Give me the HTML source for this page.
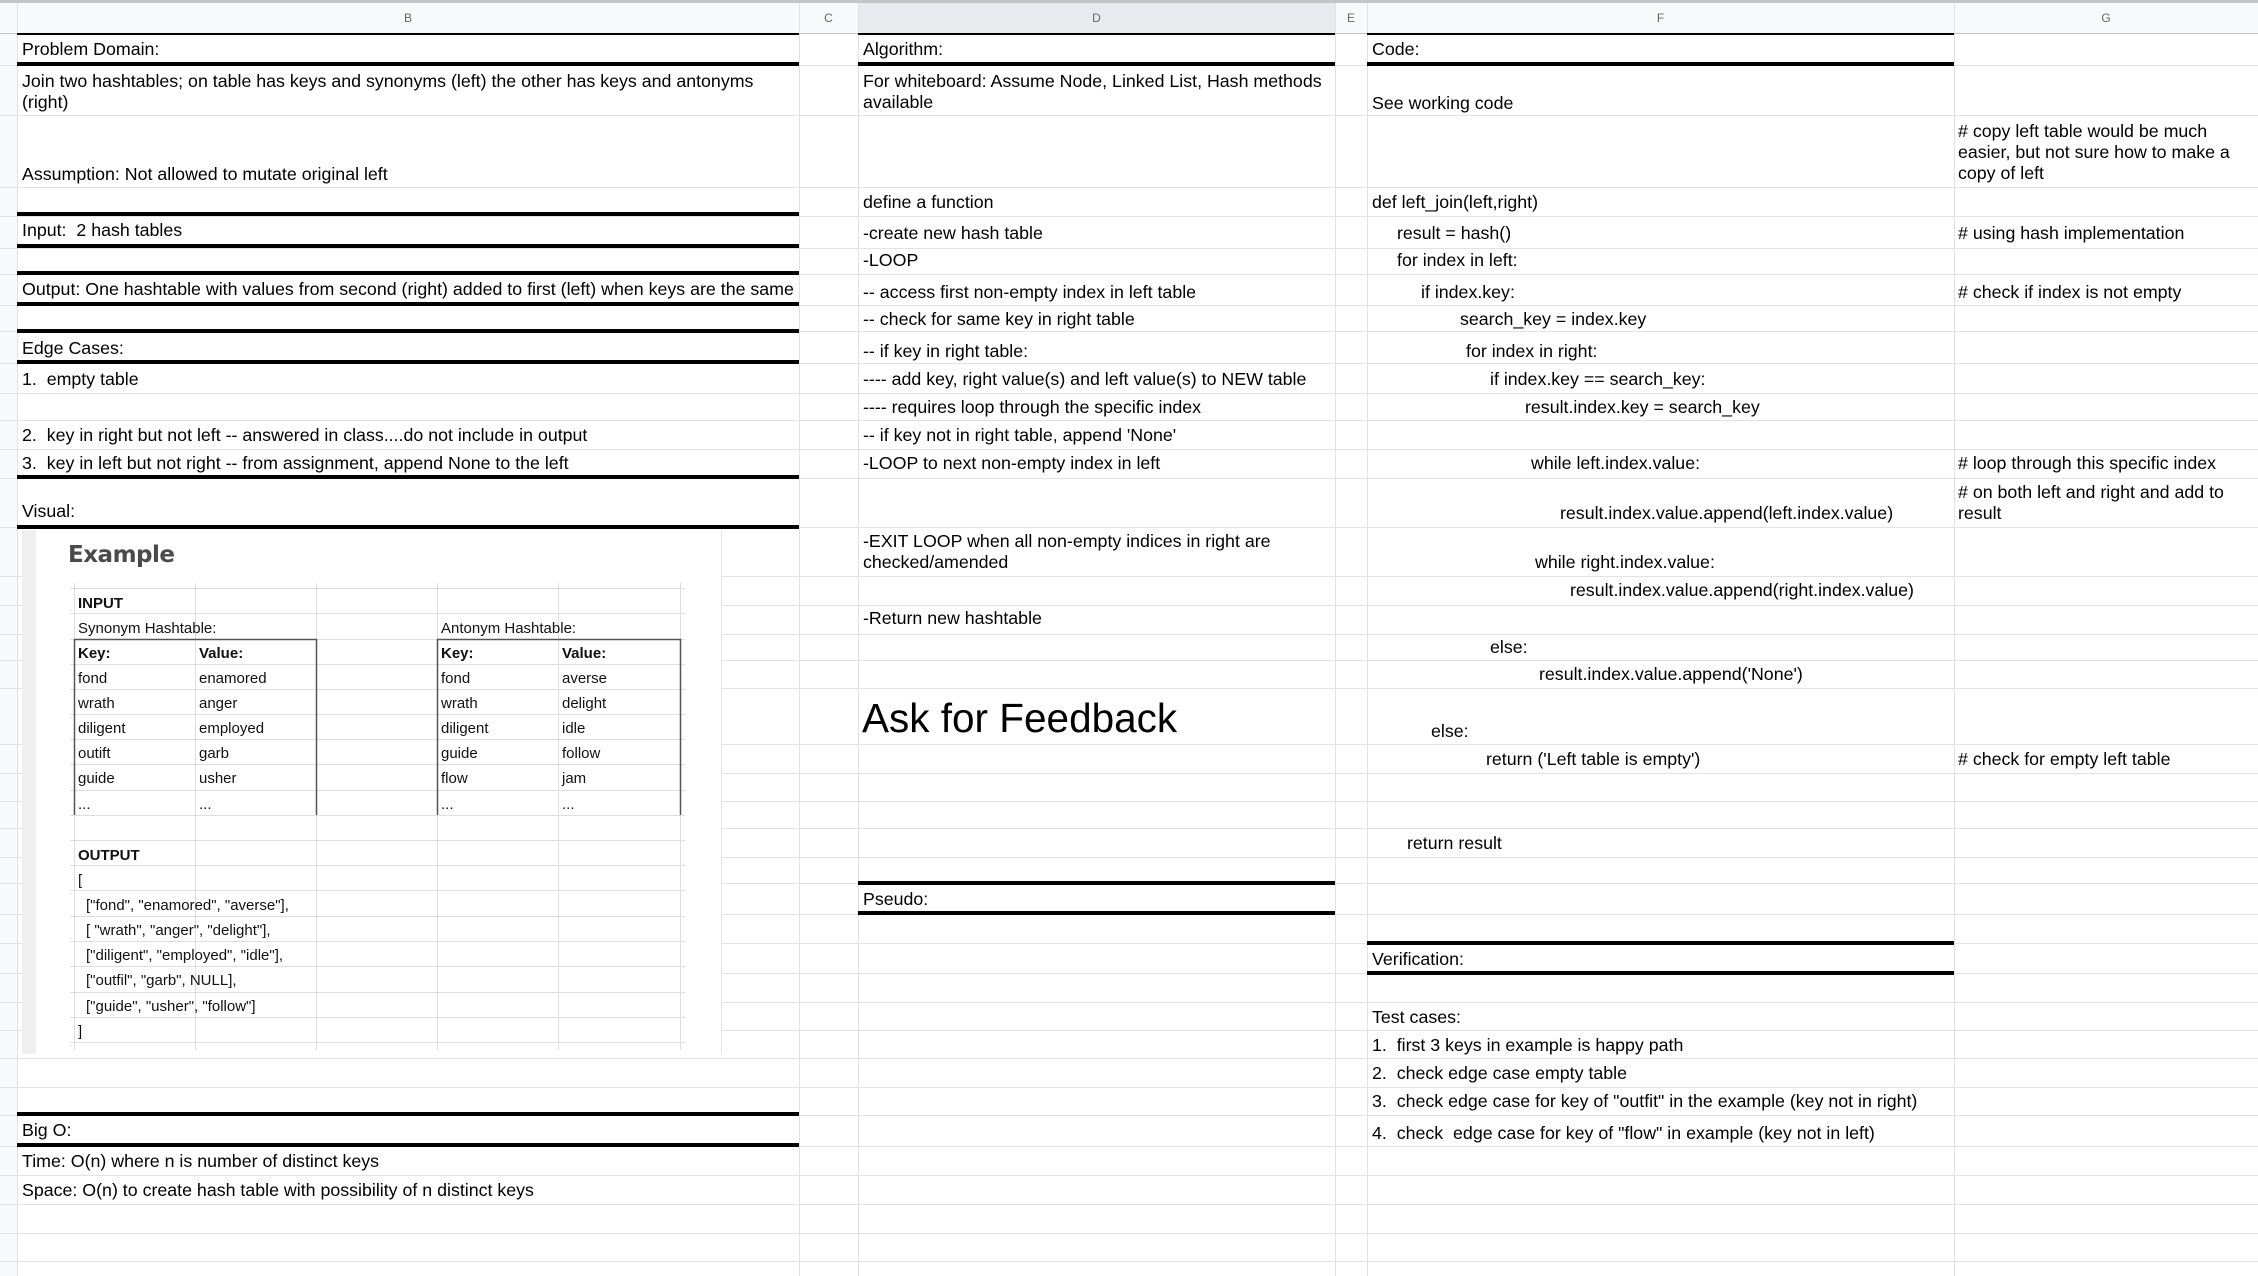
<!DOCTYPE html>
<html><head><meta charset="utf-8"><style>
*{margin:0;padding:0;box-sizing:border-box}
body{width:2258px;height:1276px;position:relative;overflow:hidden;background:#fff;font-family:"Liberation Sans",Arial,sans-serif;color:#000}
.t{position:absolute;font-size:17.8px;line-height:21px;white-space:nowrap;margin-top:1px}
.h{position:absolute;top:3px;height:30px;line-height:30px;font-size:12px;color:#666;text-align:center}
.b{position:absolute;background:#000}
.e{position:absolute;font-size:15px;line-height:17px;white-space:nowrap;color:#111}
</style></head><body>
<svg width="2258" height="1276" style="position:absolute;left:0;top:0">
<rect x="0" y="0" width="2258" height="3" fill="#c4c4c4"/>
<rect x="0" y="3" width="2258" height="30" fill="#f8f9fa"/>
<rect x="858" y="3" width="477" height="30" fill="#e8eaed"/>
<rect x="0" y="33" width="17" height="1243" fill="#f8f9fa"/>
<g stroke="#e2e2e2" stroke-width="1">
<line x1="0" y1="33.5" x2="2258" y2="33.5"/><line x1="0" y1="65.5" x2="2258" y2="65.5"/><line x1="0" y1="115.5" x2="2258" y2="115.5"/><line x1="0" y1="187.5" x2="2258" y2="187.5"/><line x1="0" y1="216.5" x2="2258" y2="216.5"/><line x1="0" y1="248.5" x2="2258" y2="248.5"/><line x1="0" y1="274.5" x2="2258" y2="274.5"/><line x1="0" y1="305.5" x2="2258" y2="305.5"/><line x1="0" y1="331.5" x2="2258" y2="331.5"/><line x1="0" y1="363.5" x2="2258" y2="363.5"/><line x1="0" y1="393.5" x2="2258" y2="393.5"/><line x1="0" y1="420.5" x2="2258" y2="420.5"/><line x1="0" y1="449.5" x2="2258" y2="449.5"/><line x1="0" y1="478.5" x2="2258" y2="478.5"/><line x1="0" y1="527.5" x2="2258" y2="527.5"/><line x1="0" y1="576.5" x2="2258" y2="576.5"/><line x1="0" y1="605.5" x2="2258" y2="605.5"/><line x1="0" y1="634.5" x2="2258" y2="634.5"/><line x1="0" y1="660.5" x2="2258" y2="660.5"/><line x1="0" y1="688.5" x2="2258" y2="688.5"/><line x1="0" y1="744.5" x2="2258" y2="744.5"/><line x1="0" y1="773.5" x2="2258" y2="773.5"/><line x1="0" y1="801.5" x2="2258" y2="801.5"/><line x1="0" y1="828.5" x2="2258" y2="828.5"/><line x1="0" y1="857.5" x2="2258" y2="857.5"/><line x1="0" y1="883.5" x2="2258" y2="883.5"/><line x1="0" y1="914.5" x2="2258" y2="914.5"/><line x1="0" y1="943.5" x2="2258" y2="943.5"/><line x1="0" y1="973.5" x2="2258" y2="973.5"/><line x1="0" y1="1002.5" x2="2258" y2="1002.5"/><line x1="0" y1="1030.5" x2="2258" y2="1030.5"/><line x1="0" y1="1058.5" x2="2258" y2="1058.5"/><line x1="0" y1="1087.5" x2="2258" y2="1087.5"/><line x1="0" y1="1115.5" x2="2258" y2="1115.5"/><line x1="0" y1="1146.5" x2="2258" y2="1146.5"/><line x1="0" y1="1175.5" x2="2258" y2="1175.5"/><line x1="0" y1="1204.5" x2="2258" y2="1204.5"/><line x1="0" y1="1233.5" x2="2258" y2="1233.5"/><line x1="0" y1="1261.5" x2="2258" y2="1261.5"/>
<line x1="17.5" y1="3" x2="17.5" y2="1276"/><line x1="799.5" y1="3" x2="799.5" y2="1276"/><line x1="858.5" y1="3" x2="858.5" y2="1276"/><line x1="1335.5" y1="3" x2="1335.5" y2="1276"/><line x1="1367.5" y1="3" x2="1367.5" y2="1276"/><line x1="1954.5" y1="3" x2="1954.5" y2="1276"/>
</g>
<line x1="0" y1="33.5" x2="2258" y2="33.5" stroke="#c4c4c4"/>
</svg>
<div class="h" style="left:17px;width:782px">B</div>
<div class="h" style="left:799px;width:59px">C</div>
<div class="h" style="left:858px;width:477px">D</div>
<div class="h" style="left:1335px;width:32px">E</div>
<div class="h" style="left:1367px;width:587px">F</div>
<div class="h" style="left:1954px;width:304px">G</div>

<div class="b" style="left:17px;top:33px;width:782px;height:2px"></div>
<div class="b" style="left:17px;top:62px;width:782px;height:4px"></div>
<div class="b" style="left:17px;top:212px;width:782px;height:4px"></div>
<div class="b" style="left:17px;top:244px;width:782px;height:4px"></div>
<div class="b" style="left:17px;top:271px;width:782px;height:4px"></div>
<div class="b" style="left:17px;top:302px;width:782px;height:4px"></div>
<div class="b" style="left:17px;top:329px;width:782px;height:4px"></div>
<div class="b" style="left:17px;top:360px;width:782px;height:4px"></div>
<div class="b" style="left:17px;top:475px;width:782px;height:4px"></div>
<div class="b" style="left:17px;top:525px;width:782px;height:4px"></div>
<div class="b" style="left:17px;top:1112px;width:782px;height:4px"></div>
<div class="b" style="left:17px;top:1143px;width:782px;height:4px"></div>
<div class="b" style="left:858px;top:33px;width:477px;height:2px"></div>
<div class="b" style="left:858px;top:62px;width:477px;height:4px"></div>
<div class="b" style="left:858px;top:881px;width:477px;height:4px"></div>
<div class="b" style="left:858px;top:911px;width:477px;height:4px"></div>
<div class="b" style="left:1367px;top:33px;width:587px;height:2px"></div>
<div class="b" style="left:1367px;top:62px;width:587px;height:4px"></div>
<div class="b" style="left:1367px;top:941px;width:587px;height:4px"></div>
<div class="b" style="left:1367px;top:971px;width:587px;height:4px"></div>

<div class="t" style="left:22px;top:38px">Problem Domain:</div>
<div class="t" style="left:22px;top:70px">Join two hashtables; on table has keys and synonyms (left) the other has keys and antonyms<br>(right)</div>
<div class="t" style="left:22px;top:163px">Assumption: Not allowed to mutate original left</div>
<div class="t" style="left:22px;top:219px">Input:&nbsp; 2 hash tables</div>
<div class="t" style="left:22px;top:278px">Output: One hashtable with values from second (right) added to first (left) when keys are the same</div>
<div class="t" style="left:22px;top:337px">Edge Cases:</div>
<div class="t" style="left:22px;top:368px">1.&nbsp; empty table</div>
<div class="t" style="left:22px;top:424px">2.&nbsp; key in right but not left -- answered in class....do not include in output</div>
<div class="t" style="left:22px;top:452px">3.&nbsp; key in left but not right -- from assignment, append None to the left</div>
<div class="t" style="left:22px;top:500px">Visual:</div>
<div class="t" style="left:22px;top:1119px">Big O:</div>
<div class="t" style="left:22px;top:1150px">Time: O(n) where n is number of distinct keys</div>
<div class="t" style="left:22px;top:1179px">Space: O(n) to create hash table with possibility of n distinct keys</div>

<div style="position:absolute;left:22px;top:530px;width:700px;height:524px;background:#fff;border-right:1px solid #e6e6e6">
<div style="position:absolute;left:0;top:0;width:14px;height:524px;background:#efefef"></div>
</div>
<div style="position:absolute;left:68px;top:542px;font-size:23px;font-weight:bold;color:#4a4a4a;font-family:'DejaVu Sans','Liberation Sans',sans-serif;letter-spacing:-0.5px">Example</div>
<svg width="2258" height="1276" style="position:absolute;left:0;top:0;pointer-events:none">
<g stroke="#dedede" stroke-width="1">
<line x1="74.5" y1="583" x2="74.5" y2="1050"/><line x1="195.5" y1="583" x2="195.5" y2="1050"/><line x1="316.5" y1="583" x2="316.5" y2="1050"/><line x1="437.5" y1="583" x2="437.5" y2="1050"/><line x1="558.5" y1="583" x2="558.5" y2="1050"/><line x1="680.5" y1="583" x2="680.5" y2="1050"/>
<line x1="70" y1="588.5" x2="685" y2="588.5"/><line x1="70" y1="613.5" x2="685" y2="613.5"/><line x1="70" y1="639.5" x2="685" y2="639.5"/><line x1="70" y1="664.5" x2="685" y2="664.5"/><line x1="70" y1="689.5" x2="685" y2="689.5"/><line x1="70" y1="714.5" x2="685" y2="714.5"/><line x1="70" y1="739.5" x2="685" y2="739.5"/><line x1="70" y1="764.5" x2="685" y2="764.5"/><line x1="70" y1="790.5" x2="685" y2="790.5"/><line x1="70" y1="815.5" x2="685" y2="815.5"/><line x1="70" y1="840.5" x2="685" y2="840.5"/><line x1="70" y1="865.5" x2="685" y2="865.5"/><line x1="70" y1="890.5" x2="685" y2="890.5"/><line x1="70" y1="916.5" x2="685" y2="916.5"/><line x1="70" y1="941.5" x2="685" y2="941.5"/><line x1="70" y1="966.5" x2="685" y2="966.5"/><line x1="70" y1="992.5" x2="685" y2="992.5"/><line x1="70" y1="1017.5" x2="685" y2="1017.5"/><line x1="70" y1="1042.5" x2="685" y2="1042.5"/>
</g>
<g stroke="#555" stroke-width="1.5" fill="none">
<path d="M74.5 815V639.5H316.5V815"/><path d="M437.5 815V639.5H680.5V815"/>
</g>
</svg>
<div class="e" style="left:78px;top:595px;font-weight:bold">INPUT</div>
<div class="e" style="left:78px;top:620px">Synonym Hashtable:</div>
<div class="e" style="left:441px;top:620px">Antonym Hashtable:</div>
<div class="e" style="left:78px;top:645px;font-weight:bold">Key:</div><div class="e" style="left:199px;top:645px;font-weight:bold">Value:</div>
<div class="e" style="left:441px;top:645px;font-weight:bold">Key:</div><div class="e" style="left:562px;top:645px;font-weight:bold">Value:</div>
<div class="e" style="left:78px;top:670px">fond</div><div class="e" style="left:199px;top:670px">enamored</div><div class="e" style="left:441px;top:670px">fond</div><div class="e" style="left:562px;top:670px">averse</div>
<div class="e" style="left:78px;top:695px">wrath</div><div class="e" style="left:199px;top:695px">anger</div><div class="e" style="left:441px;top:695px">wrath</div><div class="e" style="left:562px;top:695px">delight</div>
<div class="e" style="left:78px;top:720px">diligent</div><div class="e" style="left:199px;top:720px">employed</div><div class="e" style="left:441px;top:720px">diligent</div><div class="e" style="left:562px;top:720px">idle</div>
<div class="e" style="left:78px;top:745px">outift</div><div class="e" style="left:199px;top:745px">garb</div><div class="e" style="left:441px;top:745px">guide</div><div class="e" style="left:562px;top:745px">follow</div>
<div class="e" style="left:78px;top:770px">guide</div><div class="e" style="left:199px;top:770px">usher</div><div class="e" style="left:441px;top:770px">flow</div><div class="e" style="left:562px;top:770px">jam</div>
<div class="e" style="left:78px;top:796px">...</div><div class="e" style="left:199px;top:796px">...</div><div class="e" style="left:441px;top:796px">...</div><div class="e" style="left:562px;top:796px">...</div>
<div class="e" style="left:78px;top:847px;font-weight:bold">OUTPUT</div>
<div class="e" style="left:78px;top:872px">[</div>
<div class="e" style="left:86px;top:897px">["fond", "enamored", "averse"],</div>
<div class="e" style="left:86px;top:922px">[ "wrath", "anger", "delight"],</div>
<div class="e" style="left:86px;top:947px">["diligent", "employed", "idle"],</div>
<div class="e" style="left:86px;top:972px">["outfil", "garb", NULL],</div>
<div class="e" style="left:86px;top:998px">["guide", "usher", "follow"]</div>
<div class="e" style="left:78px;top:1023px">]</div>

<div class="t" style="left:863px;top:38px">Algorithm:</div>
<div class="t" style="left:863px;top:70px">For whiteboard: Assume Node, Linked List, Hash methods<br>available</div>
<div class="t" style="left:863px;top:191px">define a function</div>
<div class="t" style="left:863px;top:222px">-create new hash table</div>
<div class="t" style="left:863px;top:249px">-LOOP</div>
<div class="t" style="left:863px;top:281px">-- access first non-empty index in left table</div>
<div class="t" style="left:863px;top:308px">-- check for same key in right table</div>
<div class="t" style="left:863px;top:340px">-- if key in right table:</div>
<div class="t" style="left:863px;top:368px">---- add key, right value(s) and left value(s) to NEW table</div>
<div class="t" style="left:863px;top:396px">---- requires loop through the specific index</div>
<div class="t" style="left:863px;top:424px">-- if key not in right table, append 'None'</div>
<div class="t" style="left:863px;top:452px">-LOOP to next non-empty index in left</div>
<div class="t" style="left:863px;top:530px">-EXIT LOOP when all non-empty indices in right are<br>checked/amended</div>
<div class="t" style="left:863px;top:607px">-Return new hashtable</div>
<div class="t" style="left:862px;top:694px;font-size:40.5px;line-height:46px">Ask for Feedback</div>
<div class="t" style="left:863px;top:888px">Pseudo:</div>

<div class="t" style="left:1372px;top:38px">Code:</div>
<div class="t" style="left:1372px;top:92px">See working code</div>
<div class="t" style="left:1372px;top:191px">def left_join(left,right)</div>
<div class="t" style="left:1397px;top:222px">result = hash()</div>
<div class="t" style="left:1397px;top:249px">for index in left:</div>
<div class="t" style="left:1421px;top:281px">if index.key:</div>
<div class="t" style="left:1460px;top:308px">search_key = index.key</div>
<div class="t" style="left:1466px;top:340px">for index in right:</div>
<div class="t" style="left:1490px;top:368px">if index.key == search_key:</div>
<div class="t" style="left:1525px;top:396px">result.index.key = search_key</div>
<div class="t" style="left:1531px;top:452px">while left.index.value:</div>
<div class="t" style="left:1560px;top:502px">result.index.value.append(left.index.value)</div>
<div class="t" style="left:1535px;top:551px">while right.index.value:</div>
<div class="t" style="left:1570px;top:579px">result.index.value.append(right.index.value)</div>
<div class="t" style="left:1490px;top:636px">else:</div>
<div class="t" style="left:1539px;top:663px">result.index.value.append('None')</div>
<div class="t" style="left:1431px;top:720px">else:</div>
<div class="t" style="left:1486px;top:748px">return ('Left table is empty')</div>
<div class="t" style="left:1407px;top:832px">return result</div>
<div class="t" style="left:1372px;top:948px">Verification:</div>
<div class="t" style="left:1372px;top:1006px">Test cases:</div>
<div class="t" style="left:1372px;top:1034px">1.&nbsp; first 3 keys in example is happy path</div>
<div class="t" style="left:1372px;top:1062px">2.&nbsp; check edge case empty table</div>
<div class="t" style="left:1372px;top:1090px">3.&nbsp; check edge case for key of "outfit" in the example (key not in right)</div>
<div class="t" style="left:1372px;top:1122px">4.&nbsp; check&nbsp; edge case for key of "flow" in example (key not in left)</div>

<div class="t" style="left:1958px;top:120px">#&nbsp;copy left table would be much<br>easier, but not sure how to make a<br>copy of left</div>
<div class="t" style="left:1958px;top:222px"># using hash implementation</div>
<div class="t" style="left:1958px;top:281px"># check if index is not empty</div>
<div class="t" style="left:1958px;top:452px"># loop through this specific index</div>
<div class="t" style="left:1958px;top:481px"># on both left and right and add to<br>result</div>
<div class="t" style="left:1958px;top:748px"># check for empty left table</div>
</body></html>
